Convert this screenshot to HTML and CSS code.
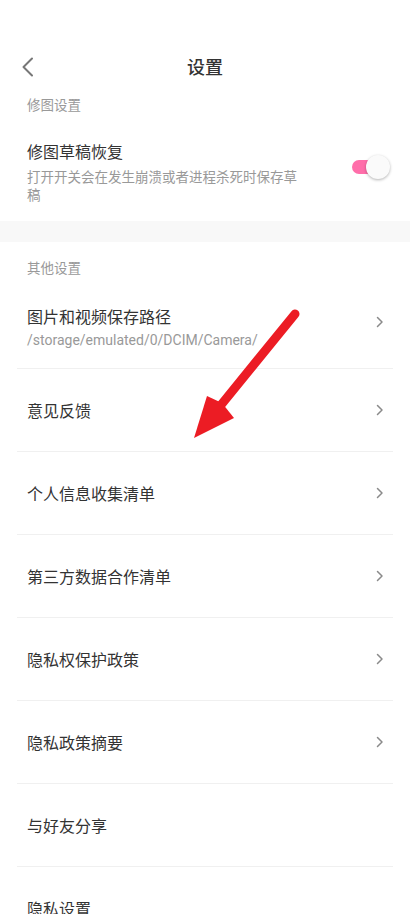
FILE: index.html
```html
<!DOCTYPE html>
<html lang="zh">
<head>
<meta charset="utf-8">
<title>设置</title>
<link rel="stylesheet" href="styles.css">
</head>
<body>
<div class="page">
  <header class="topbar">
    <svg class="back" width="14" height="20" viewBox="0 0 14 20"><path d="M11 1.5 L2.5 10 L11 18.5" fill="none" stroke="#777" stroke-width="2" stroke-linecap="round" stroke-linejoin="round"/></svg>
    <h1 class="title">设置</h1>
  </header>

  <div class="section-title first">修图设置</div>
  <div class="toggle-row">
    <div class="toggle-text">
      <div class="row-title">修图草稿恢复</div>
      <div class="row-sub">打开开关会在发生崩溃或者进程杀死时保存草稿</div>
    </div>
    <div class="switch"><span class="track"></span><span class="thumb"></span></div>
  </div>

  <div class="band"></div>

  <div class="section-title second">其他设置</div>
  <ul class="list">
    <li class="row two-line">
      <div class="row-text">
        <div class="row-title">图片和视频保存路径</div>
        <div class="row-path">/storage/emulated/0/DCIM/Camera/</div>
      </div>
      <svg class="chev" width="8" height="12" viewBox="0 0 8 12"><path d="M1.5 1.5 L6 6 L1.5 10.5" fill="none" stroke="#8a8a8a" stroke-width="1.5" stroke-linecap="round" stroke-linejoin="round"/></svg>
    </li>
    <li class="row"><div class="row-title">意见反馈</div><svg class="chev" width="8" height="12" viewBox="0 0 8 12"><path d="M1.5 1.5 L6 6 L1.5 10.5" fill="none" stroke="#8a8a8a" stroke-width="1.5" stroke-linecap="round" stroke-linejoin="round"/></svg></li>
    <li class="row"><div class="row-title">个人信息收集清单</div><svg class="chev" width="8" height="12" viewBox="0 0 8 12"><path d="M1.5 1.5 L6 6 L1.5 10.5" fill="none" stroke="#8a8a8a" stroke-width="1.5" stroke-linecap="round" stroke-linejoin="round"/></svg></li>
    <li class="row"><div class="row-title">第三方数据合作清单</div><svg class="chev" width="8" height="12" viewBox="0 0 8 12"><path d="M1.5 1.5 L6 6 L1.5 10.5" fill="none" stroke="#8a8a8a" stroke-width="1.5" stroke-linecap="round" stroke-linejoin="round"/></svg></li>
    <li class="row"><div class="row-title">隐私权保护政策</div><svg class="chev" width="8" height="12" viewBox="0 0 8 12"><path d="M1.5 1.5 L6 6 L1.5 10.5" fill="none" stroke="#8a8a8a" stroke-width="1.5" stroke-linecap="round" stroke-linejoin="round"/></svg></li>
    <li class="row"><div class="row-title">隐私政策摘要</div><svg class="chev" width="8" height="12" viewBox="0 0 8 12"><path d="M1.5 1.5 L6 6 L1.5 10.5" fill="none" stroke="#8a8a8a" stroke-width="1.5" stroke-linecap="round" stroke-linejoin="round"/></svg></li>
    <li class="row"><div class="row-title">与好友分享</div></li>
    <li class="row"><div class="row-title">隐私设置</div></li>
  </ul>

  <svg class="arrow" width="410" height="914" viewBox="0 0 410 914">
    <line x1="295" y1="270" x2="221" y2="361" stroke="#ec1c24" stroke-width="9" stroke-linecap="round"/>
    <polygon points="194,394 207,352 222,359 234,374" fill="#ec1c24"/>
  </svg>
</div>
</body>
</html>
```

FILE: styles.css
```css
* { box-sizing: border-box; }
html, body { margin: 0; padding: 0; background: #fff; }
body {
  width: 410px;
  height: 914px;
  overflow: hidden;
  font-family: "Noto Sans CJK SC", "Noto Sans", Roboto, sans-serif;
  color: #333;
}
.page { position: relative; }

.topbar {
  position: relative;
  height: 44px;
  margin-top: 44px;
  display: flex;
  align-items: center;
  justify-content: center;
}
.back { position: absolute; left: 21px; top: 13px; }
.title {
  margin: 0;
  font-size: 18px;
  font-weight: 500;
  line-height: 24px;
  color: #333;
}

.section-title {
  font-size: 13.5px;
  line-height: 18px;
  color: #999;
  padding-left: 27px;
}
.section-title.first { padding-top: 7px; height: 31px; }
.section-title.second { padding-top: 16px; height: 34px; }

.toggle-row {
  display: flex;
  align-items: center;
  justify-content: space-between;
  padding: 21px 20px 18px 27px;
}
.toggle-text { width: 280px; }
.row-title {
  font-size: 16px;
  line-height: 22px;
  color: #333;
}
.row-sub {
  margin-top: 5px;
  font-size: 13.5px;
  line-height: 18px;
  color: #999;
}
.switch {
  position: relative;
  width: 38px;
  height: 24px;
  margin-top: -10px;
}
.track {
  position: absolute;
  left: 0; top: 5px;
  width: 26px; height: 14px;
  border-radius: 7px;
  background: #ff6eaa;
}
.thumb {
  position: absolute;
  right: 0; top: 0;
  width: 24px; height: 24px;
  border-radius: 50%;
  background: #fafafa;
  box-shadow: 0 1px 3px rgba(0,0,0,0.3);
}

.band { height: 21px; background: #f8f8f8; }

.list { list-style: none; margin: 0 17px; padding: 0; }
.row {
  display: flex;
  align-items: center;
  justify-content: space-between;
  height: 83px;
  padding: 0 9px 0 10px;
  border-bottom: 1px solid #f0f0f0;
}
.row.two-line { height: 93px; }
.row-text { padding-top: 9px; }
.row-path {
  margin-top: 4px;
  font-family: Roboto, "Noto Sans", sans-serif;
  font-size: 14px;
  line-height: 18px;
  color: #999;
}
.chev { display: block; }

.arrow { position: absolute; left: 0; top: 0; pointer-events: none; }
```
